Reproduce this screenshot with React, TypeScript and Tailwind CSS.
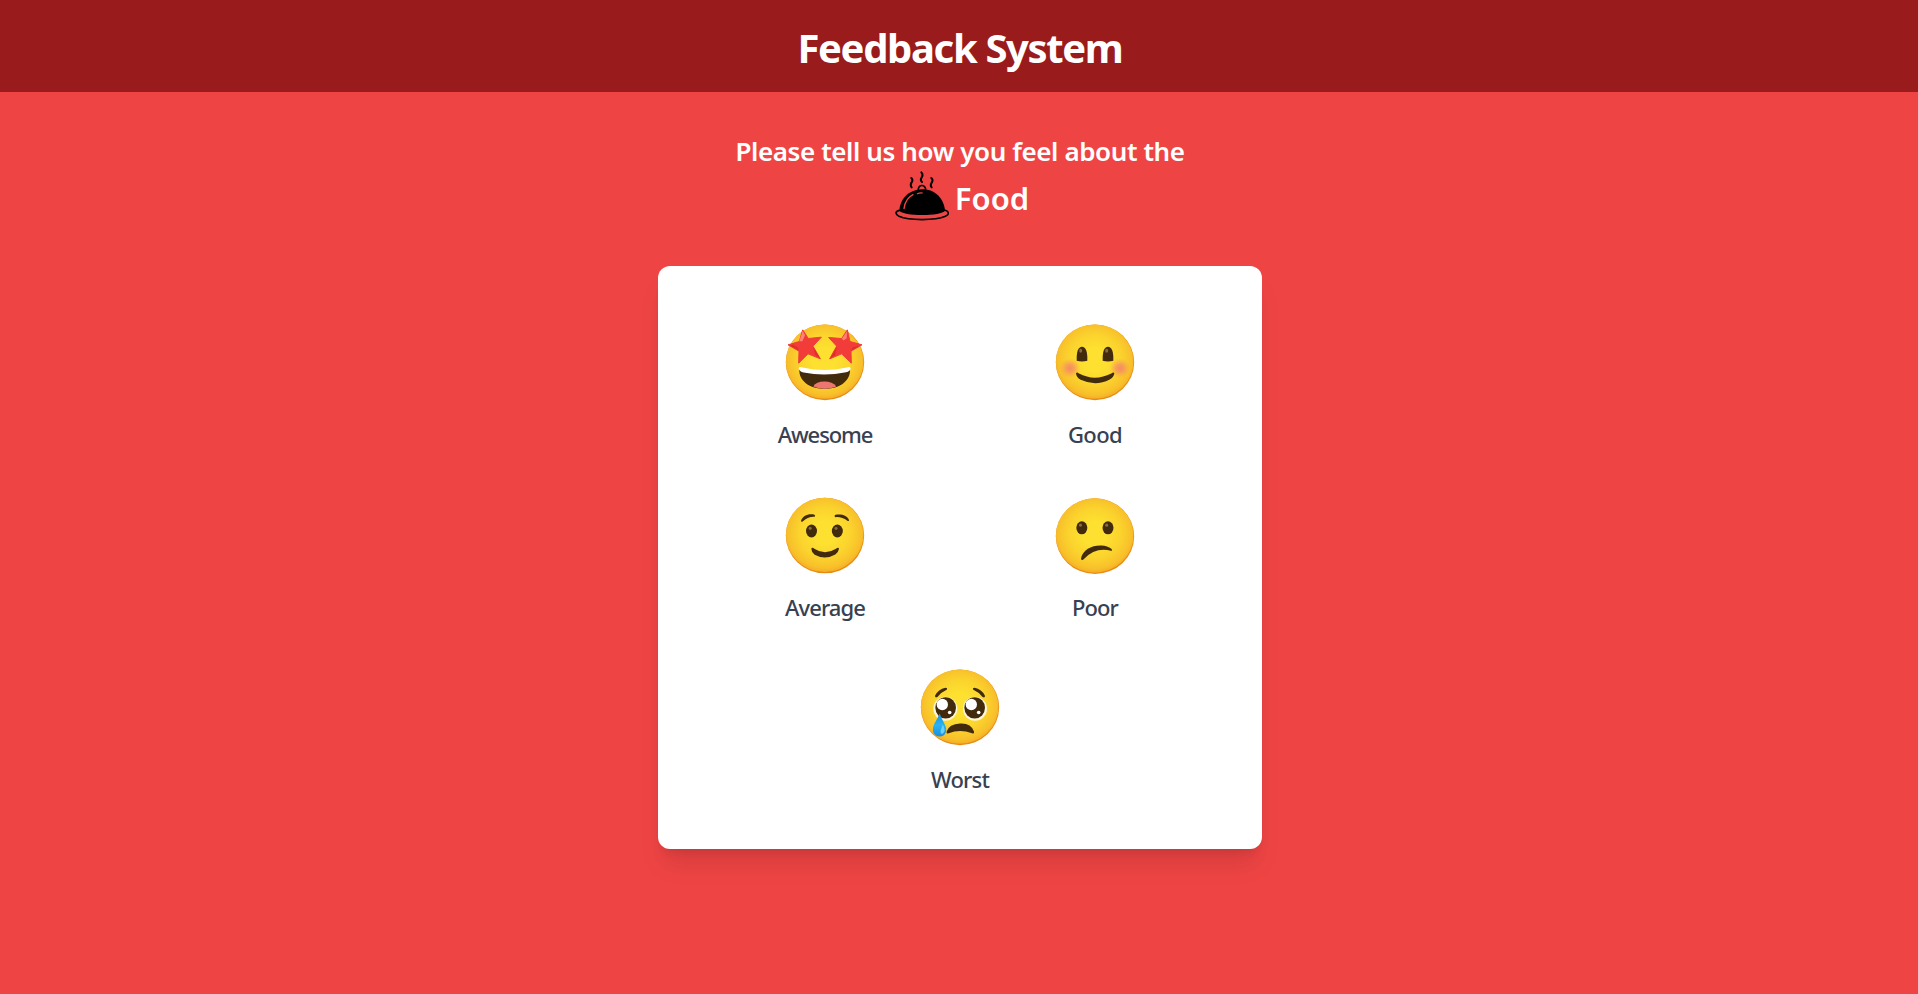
import type { ReactNode } from "react";

const BROWN = "#422b0d";

function Face({ top, shift = 0, children }: { top: number; shift?: number; children: ReactNode }) {
  return (
    <svg className="block size-20" viewBox={`45 ${top} 240 240`}>
      <defs>
        <radialGradient id="skin" cx="0.5" cy="0.47" r="0.54">
          <stop offset="0.3" stopColor="#fde030" />
          <stop offset="0.62" stopColor="#fbd32d" />
          <stop offset="0.88" stopColor="#f8c02a" />
          <stop offset="1" stopColor="#f4aa25" />
        </radialGradient>
        <radialGradient id="blush">
          <stop offset="0" stopColor="#f58468" stopOpacity="0.9" />
          <stop offset="0.4" stopColor="#f58a66" stopOpacity="0.7" />
          <stop offset="1" stopColor="#f9a050" stopOpacity="0" />
        </radialGradient>
        <linearGradient id="tear" x1="0" y1="0" x2="0" y2="1">
          <stop offset="0" stopColor="#1f8fdc" />
          <stop offset="0.5" stopColor="#29b2f2" />
          <stop offset="1" stopColor="#1b8fe0" />
        </linearGradient>
      </defs>
      <ellipse cx="165" cy={155.5 + shift} rx="117.500" ry="113.500" fill="#e88a12" />
      <ellipse cx="164" cy={153.5 + shift} rx="116.500" ry="111.500" fill="url(#skin)" />
      {children}
    </svg>
  );
}

function Eye({ x, y }: { x: number; y: number }) {
  return (
    <>
      <ellipse cx={x} cy={y} rx="16.500" ry="19.500" fill={BROWN} />
      <ellipse cx={x - 4} cy={y - 8} rx="4.500" ry="5" fill="#8a6a42" />
    </>
  );
}

function Awesome() {
  return (
    <Face top={34.5}>
      <path d="M88 176C86 211 119 235 164 235S242 211 240 176Q165 194 88 176Z" fill={BROWN} />
      <path d="M130 228Q138 213 163 213T199 228Q182 235 164 235T130 228Z" fill="#ed7770" />
      <path d="M86 173Q88 167 98 171Q163 186 230 171Q240 167 242 173Q241 182 228 185Q164 199 101 186Q88 183 86 173Z" fill="#fff" />
      <path d="M98 58L115 84L154 80L129 107L151 145L114 130L86 158L87 122L54 103L88 93Z" fill="#f23c3a" stroke="#f23c3a" strokeWidth="3" strokeLinejoin="round" />
      <path d="M232 58L240 93L276 103L243 122L244 158L215 130L179 145L200 107L176 81L215 84Z" fill="#f23c3a" stroke="#f23c3a" strokeWidth="3" strokeLinejoin="round" />
      <path d="M98 61L88 92L97 92L105 74Z M231 62L216 84L220 90L230 83Z" fill="#ff8375" />
      <path d="M58 104L87 120L84 112L70 103Z M272 104L244 120L247 111Z M128 108L150 143L137 134Z M201 108L181 143L195 135Z" fill="#df2d2d" />
    </Face>
  );
}

function Good() {
  return (
    <Face top={34.5}>
      <ellipse cx="90" cy="173" rx="32" ry="30" fill="url(#blush)" />
      <ellipse cx="240" cy="173" rx="32" ry="30" fill="url(#blush)" />
      <path d="M110 151Q109 109 126 109T142 151Q126 155 110 151Z" fill={BROWN} />
      <path d="M188 151Q187 109 204 109T220 151Q204 155 188 151Z" fill={BROWN} />
      <ellipse cx="122" cy="121" rx="4.500" ry="6" fill="#8a6a42" />
      <ellipse cx="200" cy="121" rx="4.500" ry="6" fill="#8a6a42" />
      <path d="M108 188Q111 183 117 189Q164 214 214 189Q221 183 223 188Q222 199 209 207Q167 229 122 208Q109 200 108 188Z" fill={BROWN} />
    </Face>
  );
}

function Average() {
  return (
    <Face top={43.5} shift={9.5}>
      <Eye x={124.5} y={151.5} />
      <Eye x={202} y={151.5} />
      <path d="M93 121C97 106 115 98 132 102Q138 105 134 109Q113 108 98 123Q93 125 93 121Z" fill={BROWN} />
      <path d="M237 119C233 106 216 100 197 103Q191 106 196 110Q215 108 232 121Q237 123 237 119Z" fill={BROWN} />
      <path d="M124 205Q126 198 133 205Q165 226 198 205Q206 198 207 205Q206 214 196 222Q165 240 134 223Q124 215 124 205Z" fill={BROWN} />
    </Face>
  );
}

function Poor() {
  return (
    <Face top={43.5} shift={11.5}>
      <Eye x={125.5} y={142} />
      <Eye x={204} y={142} />
      <path d="M123 234C128 208 155 194 184 195Q203 196 214 205Q219 211 213 211Q167 199 131 236Q124 242 123 234Z" fill={BROWN} />
    </Face>
  );
}

function Worst() {
  return (
    <Face top={34.5}>
      <path d="M90 121Q100 101 121 97Q129 97 125 103Q109 110 98 124Q90 129 90 121Z" fill={BROWN} />
      <path d="M240 121Q230 101 209 97Q201 97 205 103Q221 110 232 124Q240 129 240 121Z" fill={BROWN} />
      <circle cx="121" cy="160" r="36" fill="#fff6dc" />
      <circle cx="210" cy="160" r="36" fill="#fff6dc" />
      <ellipse cx="122" cy="157" rx="31" ry="32" fill={BROWN} />
      <ellipse cx="209" cy="157" rx="31" ry="32" fill={BROWN} />
      <circle cx="112" cy="147" r="17" fill="#fff" />
      <circle cx="199" cy="147" r="17" fill="#fff" />
      <circle cx="134" cy="171" r="5.500" fill="#fff" />
      <circle cx="221" cy="171" r="5.500" fill="#fff" />
      <path d="M125 228Q132 206 165 204T207 228Q209 236 201 233Q165 220 131 233Q123 236 125 228Z" fill={BROWN} />
      <path d="M104 174Q109 188 118 204C130 226 122 243 104 243S78 226 88 205Q98 188 104 174Z" fill="url(#tear)" />
      <path d="M113 207Q125 226 113 235Q105 236 107 225Z" fill="#6bd0fb" />
    </Face>
  );
}

function Cloche() {
  return (
    <svg className="block h-[50px] w-[54px] shrink-0" viewBox="47 32 162 150" fill="none" stroke="#000" strokeLinecap="round">
      <path d="M60 150C47 153 47 162 59 168C88 181 168 181 198 168C211 162 210 153 196 149" strokeWidth="5" />
      <path d="M60 151C62 118 86 88 128 87S194 118 197 151C187 168 70 168 60 151Z" fill="#000" stroke="none" />
      <path d="M117 88C116 72 139 71 139 88" strokeWidth="5" />
      <path d="M74 145C77 123 86 110 101 103" stroke="#ef4444" strokeWidth="4" />
      <path d="M114 100Q121 97 129 98" stroke="#ef4444" strokeWidth="3.500" />
      <path d="M96 53C108 64 86 68 97 81M126 36C139 49 115 54 128 65M156 53C169 64 146 69 157 81" strokeWidth="6" />
    </svg>
  );
}

function Choice({ label, tracking, children }: { label: string; tracking: string; children: ReactNode }) {
  return (
    <button type="button" className="flex w-[270px] flex-col items-center">
      {children}
      <span className={`mt-4 text-[22px] leading-8 font-medium whitespace-nowrap text-[#374151] ${tracking}`}>{label}</span>
    </button>
  );
}

export default function App() {
  return (
    <div className="flex min-h-screen flex-col items-center bg-[#ef4444] pl-[2px] font-['Noto_Sans','Open_Sans',sans-serif]">
      <header className="-ml-[2px] flex h-[92px] w-screen items-center justify-center bg-[#991b1b]">
        <h1 className="pt-1 pl-[2px] text-[40px] leading-[60px] font-bold tracking-[-1.35px] text-white">Feedback System</h1>
      </header>
      <h2 className="mt-[35px] text-[26px] leading-[48px] font-semibold tracking-[-0.4px] text-white">Please tell us how you feel about the</h2>
      <div className="-mt-1 flex h-[50px] items-center gap-[6px] pl-1">
        <Cloche />
        <span className="pt-1 text-[31px] leading-[50px] font-semibold text-white">Food</span>
      </div>
      <main className="mt-[45px] flex h-[583px] w-[604px] flex-col items-center rounded-xl bg-white pt-14 shadow-xl">
        <div className="flex h-[173px]">
          <Choice label="Awesome" tracking="tracking-[-1.1px]"><Awesome /></Choice>
          <Choice label="Good" tracking="tracking-[-0.6px]"><Good /></Choice>
        </div>
        <div className="flex h-[172px]">
          <Choice label="Average" tracking="tracking-[-0.9px]"><Average /></Choice>
          <Choice label="Poor" tracking="tracking-[-0.9px]"><Poor /></Choice>
        </div>
        <Choice label="Worst" tracking="tracking-[-0.8px]"><Worst /></Choice>
      </main>
    </div>
  );
}
